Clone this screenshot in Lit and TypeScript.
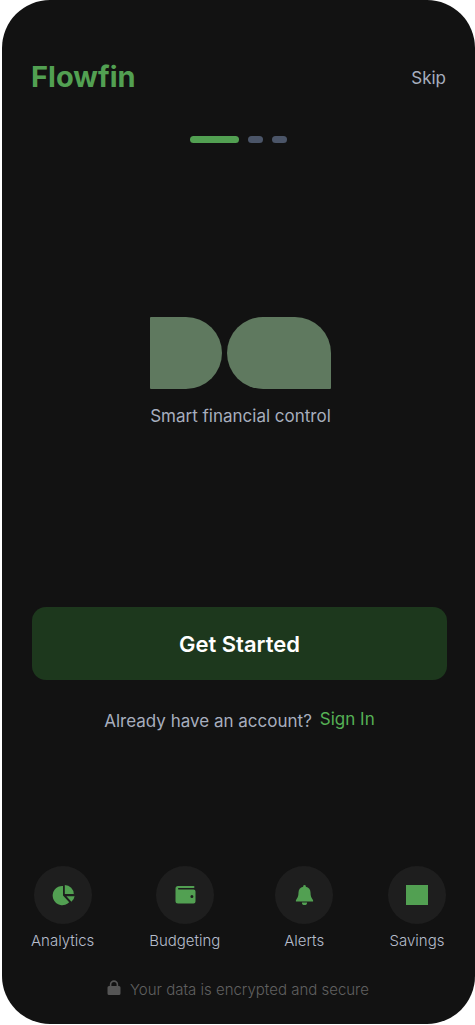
import { LitElement, html, css, svg } from "lit";
import { customElement, state } from "lit/decorators.js";

const icons = {
  analytics: svg`<svg viewBox="0 0 24 24" aria-hidden="true">
    <path d="M12 3V12.4L18.2 19.2A9.6 9.6 0 1 1 12 3Z" />
    <path d="M13.800 2A9 9 0 0 1 22.800 11H13.800Z" />
    <path d="M15.400 13.200H23.600A9 9 0 0 1 20.400 18.800Z" />
  </svg>`,
  budgeting: svg`<svg viewBox="0 0 24 24" aria-hidden="true">
    <path fill-rule="evenodd" d="M5 3H20.500A1 1 0 0 1 20.500 5H5.700A.7.7 0 0 0 5.700 6.400H20.500A2 2 0 0 1 22.500 8.400V18.500A2 2 0 0 1 20.500 20.500H5A2.500 2.500 0 0 1 2.500 18V5.500A2.500 2.500 0 0 1 5 3ZM18.900 12A1.500 1.500 0 1 0 18.900 15A1.500 1.500 0 1 0 18.900 12Z" />
  </svg>`,
  alerts: svg`<svg viewBox="0 0 24 24" aria-hidden="true">
    <path d="M12.500 2A1.300 1.300 0 0 1 13.800 3.300V3.800A6 6 0 0 1 18.500 9.600C18.500 13.500 19.500 15 21.100 17.200V18.400H3.900V17.200C5.500 15 6.500 13.500 6.500 9.600A6 6 0 0 1 11.200 3.800V3.300A1.300 1.300 0 0 1 12.500 2Z" />
    <path d="M9.900 19.400H15.100A2.600 2.600 0 0 1 9.900 19.400Z" />
  </svg>`,
  savings: svg`<svg viewBox="0 0 24 24" aria-hidden="true"><path d="M1 2H23V22H1Z" /></svg>`,
};

@customElement("app-root")
export class AppRoot extends LitElement {
  static styles = css`
    :host {
      display: block;
      background: #ffffff;
      font-family: Inter, "Liberation Sans", sans-serif;
      color: #a7aebe;
    }
    * {
      box-sizing: border-box;
    }
    .screen {
      display: flex;
      flex-direction: column;
      min-height: calc(100vh - 1px);
      margin: 0 0 1px 2px;
      padding: 60px 28px 24px 29px;
      border-radius: 48px;
      background: #121212;
    }
    button {
      border: 0;
      font: inherit;
      color: inherit;
      cursor: pointer;
    }
    .header {
      display: flex;
      align-items: center;
      justify-content: space-between;
      padding-right: 1px;
    }
    .brand {
      margin: 0;
      font-size: 29px;
      line-height: 34px;
      font-weight: 700;
      color: #52a052;
    }
    .skip {
      padding: 2px 0 0;
      background: none;
      font-size: 17px;
      line-height: 24px;
    }
    .steps {
      display: flex;
      justify-content: center;
      gap: 9px;
      margin-top: 42px;
      padding-right: 1px;
    }
    .step {
      width: 15px;
      height: 7px;
      border-radius: 4px;
      background: #4b5568;
    }
    .step.active {
      width: 49px;
      background: #52a052;
    }
    .hero {
      flex: 1;
      display: flex;
      flex-direction: column;
      align-items: center;
      justify-content: center;
      gap: 15px;
      padding: 0 0 5px 3px;
    }
    .shapes {
      display: flex;
      gap: 5px;
    }
    .shape {
      width: 72px;
      height: 72px;
      border-radius: 1px 36px 36px 1px;
      background: #5f795f;
    }
    .shape.wide {
      width: 104px;
      border-radius: 36px 36px 1px 36px;
    }
    .tagline {
      margin: 0;
      font-size: 17px;
      line-height: 24px;
    }
    .actions {
      padding-left: 1px;
    }
    .start {
      width: 100%;
      height: 73px;
      border-radius: 14px;
      background: #1d381d;
      color: #ffffff;
      font-size: 22px;
      font-weight: 600;
    }
    .account {
      display: flex;
      justify-content: center;
      gap: 8px;
      margin: 27px 0 0;
      font-size: 17px;
      line-height: 24px;
    }
    .prompt {
      padding-top: 2px;
    }
    .signin {
      color: #55b055;
      text-decoration: none;
    }
    .features {
      display: flex;
      justify-content: space-between;
      margin: 133px 0 0;
      padding: 0 1px 0 0;
      list-style: none;
    }
    .feature {
      display: flex;
      flex-direction: column;
      align-items: center;
      gap: 7px;
      font-size: 15px;
      font-weight: 300;
      line-height: 20px;
      color: #b6bdcc;
    }
    .disc {
      display: grid;
      place-items: center;
      width: 58px;
      height: 58px;
      border-radius: 50%;
      background: #1e1e1e;
    }
    .disc svg {
      width: 24px;
      height: 24px;
      fill: #52a052;
    }
    .secure {
      display: flex;
      align-items: flex-start;
      justify-content: center;
      gap: 9px;
      margin: 29px 0 0;
      padding-right: 2px;
      font-size: 15px;
      font-weight: 300;
      line-height: 20px;
      color: #606060;
    }
    .lock {
      width: 14px;
      height: 16px;
      fill: #555555;
    }
  `;

  @state() private step = 0;

  private features = [
    { label: "Analytics", icon: icons.analytics },
    { label: "Budgeting", icon: icons.budgeting },
    { label: "Alerts", icon: icons.alerts },
    { label: "Savings", icon: icons.savings },
  ];

  render() {
    return html`
      <main class="screen">
        <header class="header">
          <h1 class="brand">Flowfin</h1>
          <button class="skip" type="button" @click=${() => (this.step = 2)}>Skip</button>
        </header>
        <div class="steps">
          ${[0, 1, 2].map((i) => html`<span class="step ${i === this.step ? "active" : ""}"></span>`)}
        </div>
        <section class="hero">
          <div class="shapes">
            <span class="shape"></span>
            <span class="shape wide"></span>
          </div>
          <p class="tagline">Smart financial control</p>
        </section>
        <section class="actions">
          <button class="start" type="button">Get Started</button>
          <p class="account">
            <span class="prompt">Already have an account?</span>
            <a class="signin" href="#signin">Sign In</a>
          </p>
        </section>
        <ul class="features">
          ${this.features.map(
            (f) => html`<li class="feature"><span class="disc">${f.icon}</span><span>${f.label}</span></li>`
          )}
        </ul>
        <p class="secure">
          <svg class="lock" viewBox="0 0 14 16" aria-hidden="true">
            <path fill-rule="evenodd" d="M2.800 6V4.500A4.200 4.200 0 0 1 11.200 4.500V6H12A1.500 1.500 0 0 1 13.500 7.500V13.500A1.500 1.500 0 0 1 12 15H2A1.500 1.500 0 0 1 .5 13.500V7.500A1.500 1.500 0 0 1 2 6ZM4.400 6H9.600V4.500A2.600 2.600 0 0 0 4.400 4.500Z" />
          </svg>
          <span>Your data is encrypted and secure</span>
        </p>
      </main>
    `;
  }
}
